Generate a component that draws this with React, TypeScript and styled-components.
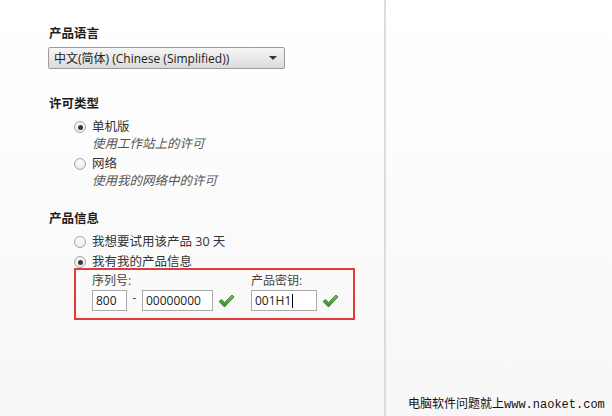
import React from 'react'
import styled, { createGlobalStyle } from 'styled-components'

const GlobalStyle = createGlobalStyle`
  html, body {
    margin: 0;
    padding: 0;
  }
  body {
    font-family: "Open Sans", "Noto Sans CJK SC", sans-serif;
    color: #2a2a2a;
  }
`

const Page = styled.div`
  display: flex;
  width: 612px;
  height: 416px;
  overflow: hidden;
  background: linear-gradient(to bottom, #ffffff 0%, #fcfcfd 40%, #f7f7f7 100%);
`

const LeftPanel = styled.div`
  width: 384px;
  flex-shrink: 0;
  padding: 25px 0 0 48px;
  box-sizing: border-box;
  display: flex;
  flex-direction: column;
`

const Divider = styled.div`
  width: 2px;
  flex-shrink: 0;
  background: #dcdcdc;
`

const RightPanel = styled.div`
  flex: 1;
  display: flex;
  flex-direction: column;
  justify-content: flex-end;
  padding: 0 0 3px 22px;
`

const Watermark = styled.div`
  font-family: "Liberation Mono", "Noto Sans CJK SC", monospace;
  font-size: 12px;
  line-height: 16px;
  color: #111;
  white-space: nowrap;
`

const Heading = styled.div<{ $top?: number }>`
  font-family: "Noto Sans CJK SC", sans-serif;
  font-weight: 700;
  font-size: 12.5px;
  line-height: 16px;
  color: #1e1e1e;
  margin-top: ${(p) => p.$top ?? 0}px;
  padding-left: 1px;
`

const Select = styled.div`
  margin-top: 6px;
  width: 237px;
  height: 22px;
  box-sizing: border-box;
  border: 1px solid #9c9c9c;
  border-radius: 2px;
  background: linear-gradient(to bottom, #f6f6f6 0%, #e9e9e9 50%, #dadada 100%);
  display: flex;
  align-items: center;
  justify-content: space-between;
  padding: 0 6px 0 5px;
  font-size: 12px;
  color: #222;
`

const Arrow = styled.span`
  width: 0;
  height: 0;
  border-left: 4px solid transparent;
  border-right: 4px solid transparent;
  border-top: 4px solid #333;
  margin-right: 1px;
`

const OptionList = styled.div<{ $top: number }>`
  display: flex;
  flex-direction: column;
  gap: 4px;
  margin-top: ${(p) => p.$top}px;
  padding-left: 27px;
`

const Option = styled.div`
  display: flex;
  flex-direction: column;
`

const OptionRow = styled.div`
  display: flex;
  align-items: center;
  gap: 6px;
  font-size: 12.5px;
  line-height: 16px;
  color: #333;
`

const Radio = styled.span<{ $checked?: boolean }>`
  width: 12px;
  height: 12px;
  box-sizing: border-box;
  border-radius: 50%;
  border: 1px solid #a8a8a8;
  background: radial-gradient(circle at 50% 40%, #ffffff 0%, #ececec 70%, #d6d6d6 100%);
  display: flex;
  align-items: center;
  justify-content: center;
  flex-shrink: 0;
  margin-left: -1px;

  &::after {
    content: '';
    width: 5px;
    height: 5px;
    border-radius: 50%;
    background: ${(p) => (p.$checked ? '#3a3a3a' : 'transparent')};
  }
`

const Sub = styled.div`
  padding-left: 17px;
  font-style: italic;
  font-size: 12.5px;
  line-height: 16px;
  color: #555;
  margin-top: 1px;
`

const KeyBox = styled.div`
  margin: -6px 0 0 -1px;
  width: 281px;
  box-sizing: border-box;
  border: 2px solid #e23a3a;
  padding: 3px 0 7px 16px;
  display: flex;
  gap: 16px;
`

const Field = styled.div`
  display: flex;
  flex-direction: column;
  gap: 1px;
`

const FieldLabel = styled.div`
  font-size: 12px;
  line-height: 16px;
  color: #444;
`

const InputRow = styled.div`
  display: flex;
  align-items: center;
`

const Input = styled.div<{ $w: number }>`
  width: ${(p) => p.$w}px;
  height: 21px;
  box-sizing: border-box;
  border: 1px solid #a9a9a9;
  background: #fff;
  font-size: 12px;
  line-height: 19px;
  padding-left: 3px;
  color: #222;
  display: flex;
  align-items: center;
`

const Caret = styled.span`
  display: inline-block;
  width: 1px;
  height: 14px;
  background: #000;
  margin-left: 1px;
`

const Dash = styled.span`
  width: 15px;
  text-align: center;
  font-size: 12px;
  color: #444;
  margin-top: -6px;
`

const Check = () => (
  <svg width="17" height="14" viewBox="0 0 17 14" style={{ marginLeft: 5 }}>
    <defs>
      <linearGradient id="ck" x1="0" y1="0" x2="0" y2="1">
        <stop offset="0" stopColor="#7cc35a" />
        <stop offset="1" stopColor="#2f8a22" />
      </linearGradient>
    </defs>
    <path
      d="M1 7.5 L3.5 5.5 L6.5 8.5 L14 1 L16 3 L6.5 13 Z"
      fill="url(#ck)"
      stroke="#2b7a1e"
      strokeWidth="0.8"
      strokeLinejoin="round"
    />
  </svg>
)

export default function App() {
  return (
    <>
      <GlobalStyle />
      <Page>
        <LeftPanel>
          <Heading>产品语言</Heading>
          <Select>
            <span>中文(简体) (Chinese (Simplified))</span>
            <Arrow />
          </Select>

          <Heading $top={26}>许可类型</Heading>
          <OptionList $top={8}>
            <Option>
              <OptionRow>
                <Radio $checked />
                单机版
              </OptionRow>
              <Sub>使用工作站上的许可</Sub>
            </Option>
            <Option>
              <OptionRow>
                <Radio />
                网络
              </OptionRow>
              <Sub>使用我的网络中的许可</Sub>
            </Option>
          </OptionList>

          <Heading $top={21}>产品信息</Heading>
          <OptionList $top={8}>
            <OptionRow>
              <Radio />
              我想要试用该产品 30 天
            </OptionRow>
            <OptionRow>
              <Radio $checked />
              我有我的产品信息
            </OptionRow>
            <KeyBox>
              <Field>
                <FieldLabel>序列号:</FieldLabel>
                <InputRow>
                  <Input $w={35}>800</Input>
                  <Dash>-</Dash>
                  <Input $w={71}>00000000</Input>
                  <Check />
                </InputRow>
              </Field>
              <Field>
                <FieldLabel>产品密钥:</FieldLabel>
                <InputRow>
                  <Input $w={66}>
                    001H1
                    <Caret />
                  </Input>
                  <Check />
                </InputRow>
              </Field>
            </KeyBox>
          </OptionList>
        </LeftPanel>
        <Divider />
        <RightPanel>
          <Watermark>电脑软件问题就上www.naoket.com</Watermark>
        </RightPanel>
      </Page>
    </>
  )
}
